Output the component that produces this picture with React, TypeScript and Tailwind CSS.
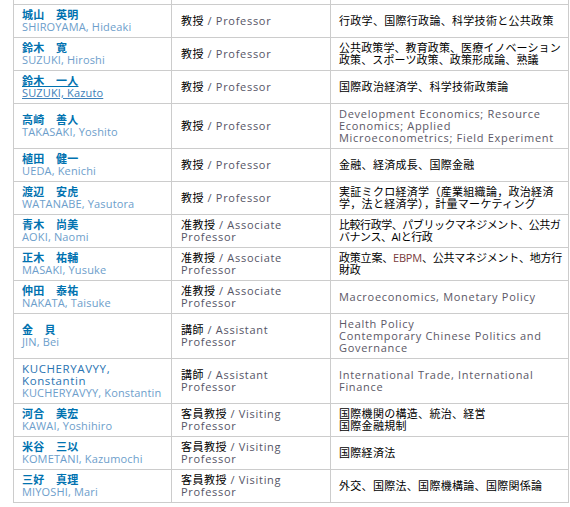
import React from "react";

type Row = {
  jp?: string;
  en: string;
  enTop?: string[];
  link?: boolean;
  titleJp: string;
  titleEn: string;
  field: React.ReactNode;
};

const J = ({ children, t }: { children: React.ReactNode; t?: string }) => (
  <span className={"whitespace-nowrap text-black " + (t ?? "tracking-[0.3px]")}>{children}</span>
);
const E = ({ children }: { children: React.ReactNode }) => (
  <span className="tracking-[0.7px] text-[#5b5866]">{children}</span>
);

const rows: Row[] = [
  { jp: "城山　英明", en: "SHIROYAMA, Hideaki", titleJp: "教授", titleEn: "Professor", field: <J>行政学、国際行政論、科学技術と公共政策</J> },
  { jp: "鈴木　寛", en: "SUZUKI, Hiroshi", titleJp: "教授", titleEn: "Professor", field: <J t="tracking-[0.1px]">公共政策学、教育政策、医療イノベーション<br />政策、スポーツ政策、政策形成論、熟議</J> },
  { jp: "鈴木　一人", en: "SUZUKI, Kazuto", link: true, titleJp: "教授", titleEn: "Professor", field: <J>国際政治経済学、科学技術政策論</J> },
  { jp: "高崎　善人", en: "TAKASAKI, Yoshito", titleJp: "教授", titleEn: "Professor", field: <E>Development Economics; Resource<br />Economics; Applied<br />Microeconometrics; Field Experiment</E> },
  { jp: "植田　健一", en: "UEDA, Kenichi", titleJp: "教授", titleEn: "Professor", field: <J>金融、経済成長、国際金融</J> },
  { jp: "渡辺　安虎", en: "WATANABE, Yasutora", titleJp: "教授", titleEn: "Professor", field: <J>実証ミクロ経済学（産業組織論，政治経済<br />学，法と経済学），計量マーケティング</J> },
  { jp: "青木　尚美", en: "AOKI, Naomi", titleJp: "准教授", titleEn: "Associate Professor", field: <J t="tracking-[-0.45px]">比較行政学、パブリックマネジメント、公共ガ<br />バナンス、AIと行政</J> },
  { jp: "正木　祐輔", en: "MASAKI, Yusuke", titleJp: "准教授", titleEn: "Associate Professor", field: <J t="tracking-[-0.2px]">政策立案、<span className="text-[#7a3b3b]">EBPM</span>、公共マネジメント、地方行<br />財政</J> },
  { jp: "仲田　泰祐", en: "NAKATA, Taisuke", titleJp: "准教授", titleEn: "Associate Professor", field: <E>Macroeconomics, Monetary Policy</E> },
  { jp: "金　貝", en: "JIN, Bei", titleJp: "講師", titleEn: "Assistant Professor", field: <E>Health Policy<br />Contemporary Chinese Politics and<br />Governance</E> },
  { enTop: ["KUCHERYAVYY,", "Konstantin"], en: "KUCHERYAVYY, Konstantin", titleJp: "講師", titleEn: "Assistant Professor", field: <E>International Trade, International<br />Finance</E> },
  { jp: "河合　美宏", en: "KAWAI, Yoshihiro", titleJp: "客員教授", titleEn: "Visiting Professor", field: <J>国際機関の構造、統治、経営<br />国際金融規制</J> },
  { jp: "米谷　三以", en: "KOMETANI, Kazumochi", titleJp: "客員教授", titleEn: "Visiting Professor", field: <J>国際経済法</J> },
  { jp: "三好　真理", en: "MIYOSHI, Mari", titleJp: "客員教授", titleEn: "Visiting Professor", field: <J>外交、国際法、国際機構論、国際関係論</J> },
];

export default function App() {
  return (
    <div
      className="w-[570px] h-[507px] overflow-hidden bg-white pl-[13px]"
      style={{ fontFamily: "'Open Sans', 'Noto Sans CJK JP', sans-serif" }}
    >
      <table className="border-collapse table-fixed w-[555px] text-[11px] leading-[12px]">
        <colgroup>
          <col className="w-[158px]" />
          <col className="w-[159px]" />
          <col className="w-[238px]" />
        </colgroup>
        <tbody>
          <tr className="h-[4px]">
            <td className="border-x border-b border-[#cccccc] p-0"></td>
            <td className="border-x border-b border-[#cccccc] p-0"></td>
            <td className="border-x border-b border-[#cccccc] p-0"></td>
          </tr>
          {rows.map((r, i) => (
            <tr key={i}>
              <td className="border border-[#cccccc] pl-[8px] pr-[2px] py-[4px] align-middle">
                {r.jp && (
                  <div className={"whitespace-nowrap font-bold text-[#0072b0] tracking-[0.3px] " + (r.link ? "underline" : "")}>
                    {r.jp}
                  </div>
                )}
                {r.enTop && (
                  <div className="whitespace-nowrap text-[#2a74b2] font-medium text-[11.5px] tracking-[0.6px]">
                    {r.enTop[0]}
                    <br />
                    {r.enTop[1]}
                  </div>
                )}
                <div
                  className={
                    "whitespace-nowrap tracking-[0.15px] " +
                    (r.link ? "underline text-[#3d80b9]" : "text-[#6d9ecb]")
                  }
                >
                  {r.en}
                </div>
              </td>
              <td className="border border-[#cccccc] pl-[9px] pr-[10px] py-[4px] align-middle">
                <span className="tracking-[0.5px] text-black">{r.titleJp}</span>
                <span className="tracking-[0.7px] text-[#555566]"> / {r.titleEn}</span>
              </td>
              <td className="border border-[#cccccc] pl-[8px] pr-[2px] py-[4px] align-middle">
                {r.field}
              </td>
            </tr>
          ))}
        </tbody>
      </table>
    </div>
  );
}
